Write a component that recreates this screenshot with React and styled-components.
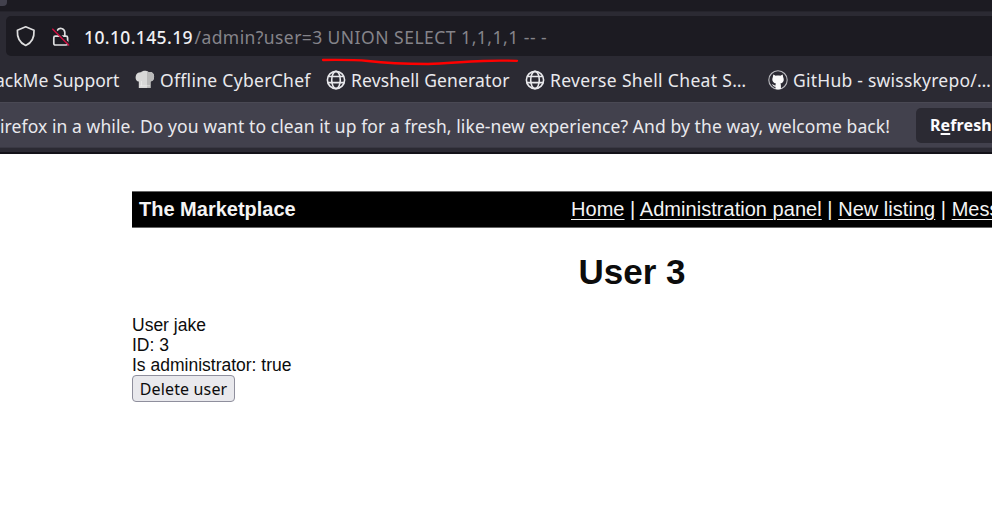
import React from "react";
import styled, { createGlobalStyle } from "styled-components";

const GlobalStyle = createGlobalStyle`
  html, body { margin: 0; overflow: hidden; background: #fff; }
  * { box-sizing: border-box; }
`;

const Window = styled.div`
  width: 992px;
  height: 522px;
  overflow: hidden;
  background: #fff;
  color: #0c0c0c;
  font-family: "Liberation Sans", Arial, sans-serif;
`;

const Chrome = styled.header`
  height: 154px;
  display: flex;
  flex-direction: column;
  background: #2b2a33;
  border-bottom: 2px solid #131219;
  color: #e9e9ed;
  font-family: "Noto Sans", "Open Sans", sans-serif;
  font-size: 17.5px;
  white-space: nowrap;
`;

const TabStrip = styled.div`
  flex: none;
  height: 12px;
  background: #1c1b22;
  border-bottom: 1px solid #25242c;
`;

const TabCorner = styled.div`
  width: 7px;
  height: 6px;
  background: #42414d;
  border-bottom-right-radius: 4px;
`;

const AddressRow = styled.div`
  position: relative;
  flex: none;
  height: 44px;
  padding: 4px 0 0 6px;
`;

const AddressField = styled.div`
  height: 40px;
  display: flex;
  align-items: center;
  padding-left: 9px;
  background: #1c1b22;
  border-radius: 5px 0 0 5px;

  svg { flex: none; }
`;

const SecurityIcons = styled.div`
  display: flex;
  gap: 14px;
`;

const UrlText = styled.span`
  display: flex;
  margin-left: 13px;
  line-height: 24px;
  padding-top: 2px;
`;

const UrlPart = styled.span`
  flex: none;
  width: ${(p) => p.$width}px;
  color: ${(p) => (p.$host ? "#f0f0f3" : "#85848a")};
  font-weight: ${(p) => (p.$host ? 500 : 400)};
  letter-spacing: ${(p) => p.$spacing}px;
`;

const Underline = styled.svg`
  position: absolute;
  left: 320px;
  top: 44px;
`;

const BookmarkBar = styled.nav`
  flex: none;
  height: 46px;
  display: flex;
  align-items: center;
`;

const Bookmark = styled.div`
  flex: none;
  width: ${(p) => p.$width}px;
  display: flex;
  align-items: center;
  justify-content: ${(p) => (p.$clipped ? "flex-end" : "flex-start")};
  gap: 5px;
  margin-right: ${(p) => p.$after || 0}px;
  letter-spacing: ${(p) => p.$spacing}px;
  line-height: 24px;
  padding-top: 1px;

  svg { flex: none; }
`;

const Notice = styled.div`
  flex: none;
  height: 46px;
  display: flex;
  align-items: center;
  background: #42414d;
  border-top: 1px solid #4a4954;
  border-bottom: 1px solid #393843;
`;

const NoticeText = styled.div`
  flex: none;
  width: 890px;
  display: flex;
  justify-content: flex-end;
  padding-top: 2px;
  letter-spacing: 0.085px;
`;

const RefreshButton = styled.button`
  flex: none;
  width: 200px;
  height: 35px;
  margin-left: 26px;
  padding: 0 0 0 14px;
  border: 0;
  border-radius: 5px;
  background: #2b2a33;
  color: #fbfbfe;
  font: 700 16px/30px "Noto Sans", sans-serif;
  letter-spacing: 0.1px;
  text-align: left;

  u { text-decoration-thickness: 2px; text-underline-offset: 2px; }
`;

const Page = styled.main`
  width: 1000px;
  margin: 38px 0 0 132px;
`;

const SiteBar = styled.div`
  height: 35px;
  display: flex;
  align-items: center;
  padding: 0 0 2px 7px;
  background: #000;
  box-shadow: 0 -1px #666, 0 1px #666;
  color: #f4f4f4;
  font-size: 20px;
  line-height: 24px;
`;

const SiteName = styled.strong`
  width: 432px;
`;

const SiteLinks = styled.nav`
  white-space: pre;
  letter-spacing: 0.035px;

  a {
    color: #f4f4f4;
    text-decoration: underline;
    text-decoration-thickness: 1px;
    text-underline-offset: 3px;
  }
`;

const Title = styled.h1`
  margin: 25px 0 23px;
  font-size: 35px;
  line-height: 40px;
  text-align: center;
`;

const Detail = styled.div`
  font-size: 17.5px;
  line-height: 20px;
`;

const DeleteButton = styled.button`
  display: block;
  width: 103px;
  height: 27px;
  padding: 0;
  border: 1px solid #8f8f9d;
  border-radius: 4px;
  background: #e9e9ed;
  color: #0c0c0c;
  font: 16px/24px "Noto Sans", sans-serif;
  letter-spacing: 0.15px;
`;

const ShieldIcon = () => (
  <svg width="22" height="24" viewBox="0 0 22 24" fill="none" stroke="#dededf" strokeWidth="1.7" strokeLinejoin="round">
    <path d="M10.7 2.8 19 6.2c.4 6.5-1.500 12.300-8.300 15.300C3.900 18.500 2 12.700 2.400 6.200Z" />
  </svg>
);

const InsecureLockIcon = () => (
  <svg width="20" height="24" viewBox="0 0 20 24" fill="none" strokeLinecap="round">
    <path d="M6 6.800a4.100 4.100 0 0 1 7.800 1.300V12" stroke="#dededf" strokeWidth="1.700" />
    <rect x="2.800" y="12.200" width="13.800" height="8.800" rx="1.500" stroke="#dededf" strokeWidth="1.700" />
    <path d="M3.200 4.700 19 20.500" stroke="#1c1b22" strokeWidth="1.600" />
    <path d="M1.800 5.200 17.600 21" stroke="#c90f40" strokeWidth="1.600" />
  </svg>
);

const ChefHatIcon = () => (
  <svg width="20" height="20" viewBox="0 0 20 20">
    <path d="M3.800 18V11.500C.7 11.600-.2 7.500 1.300 4.600 2.400 2.500 4.700 2 6.100 2.300 7.500.3 12.200.3 13.700 2.300c3.100-.8 5.500 1.200 5.400 4.400 0 2.900-1.500 4.600-3.600 4.800V18Z" fill="#d8d8d8" />
    <path d="M12 1.200c.8.200 1.300.6 1.700 1.100 3.100-.8 5.500 1.200 5.400 4.400 0 2.900-1.500 4.600-3.600 4.800V18H12Z" fill="#b9b9b9" />
    <path d="M5 15.800h10M6.500 11v5" stroke="#ececec" strokeWidth="0.700" />
  </svg>
);

const GlobeIcon = () => (
  <svg width="20" height="20" viewBox="0 0 20 20" fill="none" stroke="#e9e9ed" strokeWidth="1.600">
    <circle cx="10" cy="10" r="8.600" />
    <ellipse cx="10" cy="10" rx="4.300" ry="8.600" />
    <path d="M2.500 6.500h15M1.500 12.600h17" />
  </svg>
);

const GitHubIcon = () => (
  <svg width="20" height="20" viewBox="0 0 20 20">
    <circle cx="10" cy="10" r="9.200" fill="#2b2a33" stroke="#b9b9be" strokeWidth="1.100" />
    <path d="M5.300 4.600 7.700 5.700c1.500-.3 3.100-.3 4.600 0l2.400-1.100.5 2.700c1.300 3 .2 5.700-2.800 6.200.4.500.5 1.200.5 2v3.400c-1.700.6-3.900.6-5.400 0v-2.100c-2.200.3-2.500-1.800-3.600-2.500 1.700-.4 2 1.500 3.600 1.200 0-.9.100-1.500.5-2-3-.5-4.500-3.200-3.200-6.200Z" fill="#fafafa" />
  </svg>
);

export default function App() {
  return (
    <>
      <GlobalStyle />
      <Window>
        <Chrome>
          <TabStrip><TabCorner /></TabStrip>
          <AddressRow>
            <AddressField>
              <SecurityIcons>
                <ShieldIcon />
                <InsecureLockIcon />
              </SecurityIcons>
              <UrlText>
                <UrlPart $host $width={110.5} $spacing={0.38}>10.10.145.19</UrlPart>
                <UrlPart $width={133} $spacing={0.42}>/admin?user=3</UrlPart>
                <UrlPart $width={222} $spacing={0.5}>UNION SELECT 1,1,1,1 -- -</UrlPart>
              </UrlText>
            </AddressField>
            <Underline width="202" height="10" fill="none">
              <path d="M3 4C19 3.800 34 3.700 48 5C68 7.500 88 8 108 8C128 7.500 143 5.500 163 5C179 4.300 186 4.800 197 4.800" stroke="#ff0000" strokeWidth="2.300" strokeLinecap="round" />
            </Underline>
          </AddressRow>
          <BookmarkBar>
            <Bookmark $width={119.5} $clipped $after={15.5} $spacing={0.05}>HackMe Support</Bookmark>
            <Bookmark $width={191} $spacing={0.3}><ChefHatIcon />Offline CyberChef</Bookmark>
            <Bookmark $width={199} $spacing={0.14}><GlobeIcon />Revshell Generator</Bookmark>
            <Bookmark $width={243} $spacing={0.34}><GlobeIcon />Reverse Shell Cheat S…</Bookmark>
            <Bookmark $width={230} $spacing={0.23}><GitHubIcon />GitHub - swisskyrepo/…</Bookmark>
          </BookmarkBar>
          <Notice>
            <NoticeText>irefox in a while. Do you want to clean it up for a fresh, like-new experience? And by the way, welcome back!</NoticeText>
            <RefreshButton>R<u>e</u>fresh Firefox…</RefreshButton>
          </Notice>
        </Chrome>
        <Page>
          <SiteBar>
            <SiteName>The Marketplace</SiteName>
            <SiteLinks><a>Home</a> | <a>Administration panel</a> | <a>New listing</a> | <a>Messages</a></SiteLinks>
          </SiteBar>
          <Title>User 3</Title>
          <Detail>User jake</Detail>
          <Detail>ID: 3</Detail>
          <Detail>Is administrator: true</Detail>
          <DeleteButton>Delete user</DeleteButton>
        </Page>
      </Window>
    </>
  );
}
